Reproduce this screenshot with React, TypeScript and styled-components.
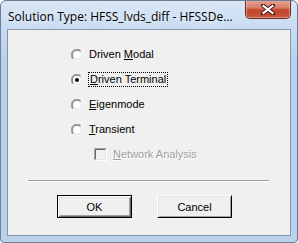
import styled, { createGlobalStyle } from "styled-components";

const colors = {
  frame: "#bad1ec",
  frameTop: "#d9e6f5",
  frameEdge: "#6b7f99",
  clientEdge: "#8396ae",
  face: "#f0f0f0",
  text: "#000000",
  disabled: "#a0a0a0",
  shadow: "#a0a0a0",
  darkShadow: "#696969",
  light: "#e3e3e3",
};

const GlobalStyle = createGlobalStyle`
  html, body {
    margin: 0;
    padding: 0;
    background: #ffffff;
  }
  * {
    box-sizing: border-box;
  }
`;

const Window = styled.div`
  width: 298px;
  height: 243px;
  display: flex;
  flex-direction: column;
  border: 1px solid ${colors.frameEdge};
  border-radius: 6px 6px 4px 4px;
  background: linear-gradient(
    to bottom,
    ${colors.frameTop} 0px,
    #c9dcf1 28px,
    ${colors.frame} 60px,
    ${colors.frame} 100%
  );
  padding: 0 6px 6px 6px;
  overflow: hidden;
`;

const TitleBar = styled.div`
  height: 28px;
  display: flex;
  align-items: flex-start;
  flex-shrink: 0;
`;

const Title = styled.span`
  font-family: "Open Sans", "Noto Sans", sans-serif;
  font-size: 12px;
  color: ${colors.text};
  margin-top: 7px;
  margin-left: 1px;
  white-space: nowrap;
  text-shadow: 0 0 6px rgba(255, 255, 255, 0.9);
`;

const CloseButton = styled.div`
  margin-left: auto;
  margin-top: -1px;
  width: 46px;
  height: 19px;
  border: 1px solid #6b2a1f;
  border-top: none;
  border-radius: 0 0 5px 5px;
  background: linear-gradient(
    to bottom,
    #e6a595 0%,
    #d47a63 45%,
    #c2442a 55%,
    #c9573c 100%
  );
  display: flex;
  align-items: center;
  justify-content: center;
  box-shadow: inset 0 0 0 1px rgba(255, 220, 210, 0.45);
`;

const Client = styled.div`
  flex: 1;
  border: 1px solid ${colors.clientEdge};
  background: ${colors.face};
  display: flex;
  flex-direction: column;
`;

const Options = styled.div`
  display: flex;
  flex-direction: column;
  padding: 12px 0 0 63px;
`;

const Row = styled.div<{ $indent?: number }>`
  height: 25px;
  display: flex;
  align-items: center;
  padding-left: ${(p) => p.$indent ?? 0}px;
`;

const Label = styled.span<{ $disabled?: boolean; $focused?: boolean }>`
  font-family: "Liberation Sans", Arial, sans-serif;
  font-size: 11px;
  color: ${(p) => (p.$disabled ? colors.disabled : colors.text)};
  margin-left: ${(p) => (p.$focused ? 5 : 6)}px;
  padding: ${(p) => (p.$focused ? "1px" : "0")};
  border: ${(p) => (p.$focused ? "1px dotted #000" : "none")};
  line-height: 11px;
  white-space: nowrap;
  text-shadow: ${(p) => (p.$disabled ? "1px 1px 0 #ffffff" : "none")};
  u {
    text-decoration: underline;
    text-underline-offset: 1px;
  }
`;

const Separator = styled.div`
  margin: 13px 21px 0 20px;
  height: 2px;
  border-top: 1px solid #a0a0a0;
  border-bottom: 1px solid #ffffff;
`;

const ButtonRow = styled.div`
  display: flex;
  gap: 25px;
  padding-left: 49px;
  margin-top: 13px;
`;

const PushButton = styled.button<{ $default?: boolean }>`
  width: 75px;
  height: 23px;
  padding: 0;
  background: ${colors.face};
  font-family: "Liberation Sans", Arial, sans-serif;
  font-size: 11px;
  color: ${colors.text};
  border: 1px solid;
  border-color: ${(p) =>
    p.$default ? "#000000" : "#ffffff #000000 #000000 #ffffff"};
  box-shadow: ${(p) =>
    p.$default
      ? "inset 1px 1px 0 #ffffff, inset -1px -1px 0 #696969, inset 2px 2px 0 #e3e3e3, inset -2px -2px 0 #a0a0a0"
      : "inset 1px 1px 0 #e3e3e3, inset -1px -1px 0 #a0a0a0"};
`;

function RadioGlyph({ checked }: { checked?: boolean }) {
  return (
    <svg width="12" height="12" viewBox="0 0 12 12">
      <path d="M10.2 1.8 A5.5 5.5 0 0 0 1.8 10.2" fill="none" stroke="#a0a0a0" strokeWidth="1" />
      <path d="M10.2 1.8 A5.5 5.5 0 0 1 1.8 10.2" fill="none" stroke="#ffffff" strokeWidth="1" />
      <path d="M9.5 2.5 A4.5 4.5 0 0 0 2.5 9.5" fill="none" stroke="#696969" strokeWidth="1" />
      <path d="M9.5 2.5 A4.5 4.5 0 0 1 2.5 9.5" fill="none" stroke="#e3e3e3" strokeWidth="1" />
      <circle cx="6" cy="6" r="3.6" fill="#ffffff" />
      {checked && <circle cx="6" cy="6" r="2" fill="#000000" />}
    </svg>
  );
}

function CheckGlyph() {
  return (
    <svg width="13" height="13" viewBox="0 0 13 13">
      <rect x="0" y="0" width="13" height="13" fill="#ffffff" />
      <path d="M0.5 12.5 V0.5 H12.5" fill="none" stroke="#a0a0a0" />
      <path d="M1.5 11.5 V1.5 H11.5" fill="none" stroke="#696969" />
      <path d="M1.5 11.5 H11.5 V1.5" fill="none" stroke="#e3e3e3" />
      <rect x="2" y="2" width="9" height="9" fill="#f0f0f0" />
    </svg>
  );
}

function CloseGlyph() {
  return (
    <svg width="14" height="11" viewBox="0 0 14 11">
      <path d="M2 1.5 L12 9.5 M12 1.5 L2 9.5" stroke="#4a1a12" strokeWidth="4" strokeLinecap="square" />
      <path d="M2.5 2 L11.5 9 M11.5 2 L2.5 9" stroke="#ffffff" strokeWidth="2.2" strokeLinecap="square" />
    </svg>
  );
}

export default function App() {
  return (
    <>
      <GlobalStyle />
      <Window>
        <TitleBar>
          <Title>Solution Type: HFSS_lvds_diff - HFSSDe...</Title>
          <CloseButton>
            <CloseGlyph />
          </CloseButton>
        </TitleBar>
        <Client>
          <Options>
            <Row>
              <RadioGlyph />
              <Label>
                Driven <u>M</u>odal
              </Label>
            </Row>
            <Row>
              <RadioGlyph checked />
              <Label $focused>
                <u>D</u>riven Terminal
              </Label>
            </Row>
            <Row>
              <RadioGlyph />
              <Label>
                <u>E</u>igenmode
              </Label>
            </Row>
            <Row>
              <RadioGlyph />
              <Label>
                <u>T</u>ransient
              </Label>
            </Row>
            <Row $indent={23}>
              <CheckGlyph />
              <Label $disabled>
                <u>N</u>etwork Analysis
              </Label>
            </Row>
          </Options>
          <Separator />
          <ButtonRow>
            <PushButton $default>OK</PushButton>
            <PushButton>Cancel</PushButton>
          </ButtonRow>
        </Client>
      </Window>
    </>
  );
}
